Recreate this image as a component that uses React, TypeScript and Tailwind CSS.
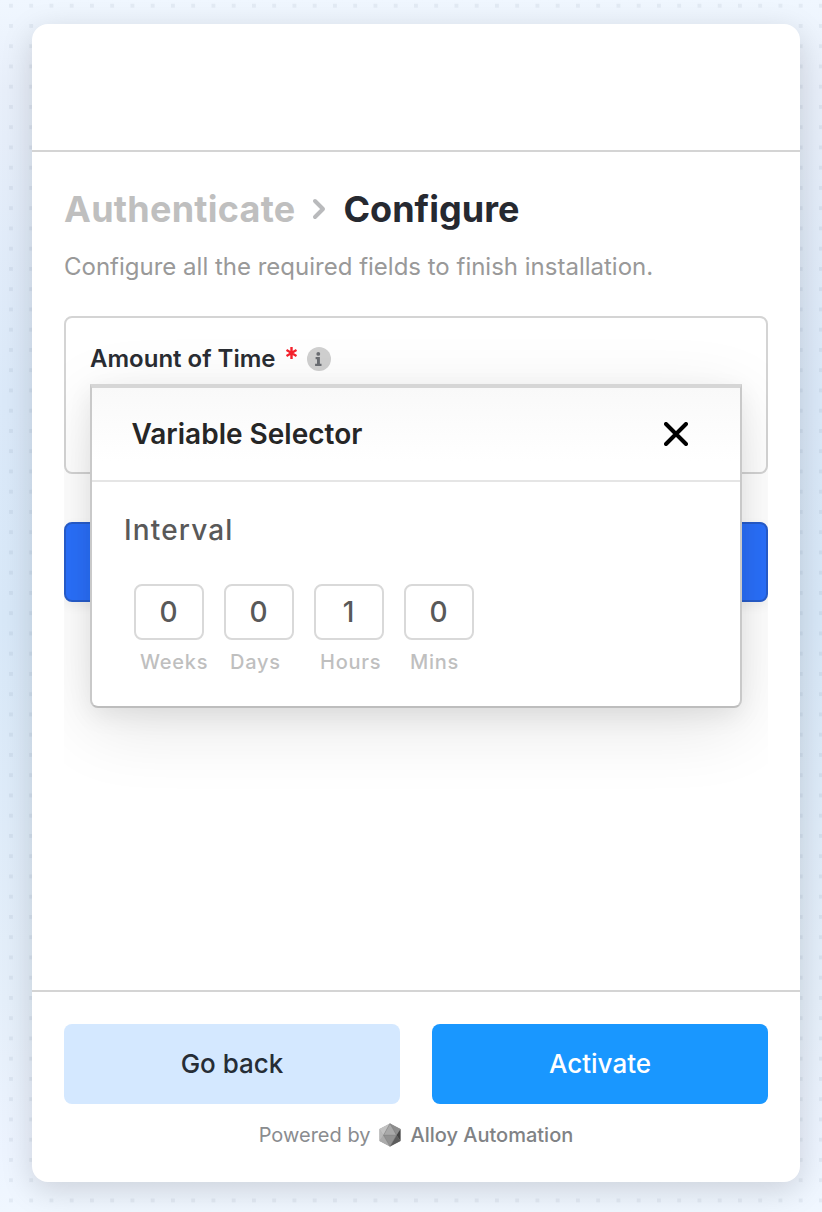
import React from "react";

const units = [
  { label: "Weeks", value: "0" },
  { label: "Days", value: "0" },
  { label: "Hours", value: "1" },
  { label: "Mins", value: "0" },
];

function AlloyLogo() {
  return (
    <svg className="h-6 w-[22px] shrink-0" viewBox="0 0 22 24">
      <path d="M11 .5 21.5 6V18L11 23.5.5 18V6Z" fill="#a0a0a0" />
      <path d="M.5 6 4.5 12.2.5 18Z" fill="#b8b8b8" />
      <path d="M11 .5.5 6 4.5 12.2Z" fill="#c2c2c2" />
      <path d="M11 .5 4.5 12.2H17.5Z" fill="#a9a9a9" />
      <path d="M11 .5 21.5 6 17.5 12.2Z" fill="#8e8e8e" />
      <path d="M4.5 12.2H17.5L11 23.5Z" fill="#929292" />
      <path d="M.5 18 4.5 12.2 11 23.5Z" fill="#ababab" />
      <path d="M21.5 6V18L17.5 12.2Z" fill="#444" />
      <path d="M21.5 18 17.5 12.2 11 23.5Z" fill="#5c5c5c" />
      <path d="M11 .5 4.5 12.2H17.5ZM4.5 12.2 11 23.5 17.5 12.2" fill="none" stroke="#747474" strokeWidth=".4" />
    </svg>
  );
}

function VariableSelector() {
  return (
    <section className="absolute top-[68px] left-[26px] flex h-[324px] w-[652px] flex-col rounded-b-[8px] border-2 border-t-4 border-[#c9c9c9] border-t-[#d6d6d6] border-b-[#bdbdbd] bg-white shadow-[0_18px_72px_rgba(0,0,0,0.11),0_8px_24px_rgba(0,0,0,0.07)]">
      <header className="flex h-[94px] items-center justify-between border-b-2 border-[#e5e5e5] bg-linear-to-b from-[#f9f9f9] to-white to-80% pr-[52px] pl-[39.5px]">
        <h2 className="text-[28px] font-semibold text-[#262626]">Variable Selector</h2>
        <svg className="size-6" viewBox="0 0 24 24" fill="none" stroke="#000" strokeWidth="4" strokeLinecap="round">
          <path d="M2 2 22 22M22 2 2 22" />
        </svg>
      </header>
      <h3 className="mt-7 ml-8 text-[28px] leading-10 font-medium tracking-[1.15px] text-[#595959]">Interval</h3>
      <div className="mt-[34px] ml-[42px] flex gap-5">
        {units.map((u) => (
          <div key={u.label} className="w-[70px]">
            <div className="flex h-14 items-center justify-center rounded-[8px] border-2 border-[#d9d9d9] pr-px text-[28px] font-medium text-[#595959]">
              {u.value}
            </div>
            <div className="mt-2 ml-1.5 text-[20px] leading-7 font-medium tracking-[0.75px] text-[#bfbfbf]">{u.label}</div>
          </div>
        ))}
      </div>
    </section>
  );
}

export default function App() {
  return (
    <div className="h-[1212px] w-[822px] bg-[linear-gradient(to_bottom,#f0f7ff_0px,#e8effa_90px,#dbe9f9_400px,#d8e8f8_620px,#e5effa_1000px,#edf4ff_1150px,#f0f7ff_1212px)] font-['Inter',sans-serif]">
      <div className="h-full [background-image:conic-gradient(from_270deg_at_4px_4px,rgba(60,80,110,0.075)_90deg,transparent_0deg)] [background-position:9px_3.75px] [background-size:20.25px_20.25px] pt-6 pl-8">
        <main className="flex h-[1158px] w-[768px] flex-col overflow-hidden rounded-[16px] bg-white shadow-[0_8px_32px_rgba(0,0,0,0.15)]">
          <div className="h-32 shrink-0 border-b-2 border-[#d4d4d4]" />
          <div className="flex-1 px-8 pt-8">
            <div className="flex h-[50px] items-center text-[36px] font-bold">
              <span className="tracking-[0.25px] text-[#bfbfbf]">Authenticate</span>
              <svg className="mr-[17px] ml-[17px] h-[22px] w-[14px]" viewBox="0 0 14 22" fill="none" stroke="#b9babc" strokeWidth="4" strokeLinecap="round" strokeLinejoin="round">
                <path d="M3 3 11 11 3 19" />
              </svg>
              <span className="text-[#262930]">Configure</span>
            </div>
            <p className="mt-[13px] text-[24px] leading-10 text-[#999]">Configure all the required fields to finish installation.</p>
            <div className="relative mt-[29px] h-[520px] overflow-hidden">
              <div className="h-[158px] rounded-[8px] border-2 border-[#d4d4d4] px-6 pt-[21px]">
                <div className="flex h-10 items-center text-[24px] font-semibold text-[#2a2d33]">
                  Amount of Time
                  <svg className="mb-3 ml-[10px] h-3 w-[11px]" viewBox="0 0 11 12" fill="none" stroke="#f5222d" strokeWidth="2.4">
                    <path d="M5.5 0V12M.5 3 10.5 9M10.5 3 .5 9" />
                  </svg>
                  <span className="ml-2.5 flex size-6 items-center justify-center rounded-full bg-[#d0d0d0]">
                    <svg className="h-[14px] w-[7px]" viewBox="0 0 7 14" fill="#6a6d72">
                      <circle cx="3.3" cy="1.9" r="1.9" />
                      <path d="M.6 5H4.9V11.8H6.5V14H.1V11.8H2V7.2H.6Z" />
                    </svg>
                  </span>
                </div>
              </div>
              <div className="mt-12 h-20 rounded-[8px] border-2 border-[#275dcc] bg-[#2a70fb] shadow-[0_4px_12px_rgba(0,0,0,0.06)]" />
              <VariableSelector />
            </div>
          </div>
          <footer className="h-48 shrink-0 border-t-2 border-[#d4d4d4] px-8 pt-8">
            <div className="flex gap-8 text-[26px] font-medium">
              <button className="h-20 flex-1 rounded-[8px] bg-[#d4e8ff] pb-px text-[#262d36]">Go back</button>
              <button className="h-20 flex-1 rounded-[8px] bg-[#1997ff] pb-px text-white">Activate</button>
            </div>
            <div className="mt-4 flex h-[30px] items-center justify-center text-[20px] text-[#8a8c8f]">
              <span>Powered by</span>
              <span className="mr-2.5 ml-2 flex"><AlloyLogo /></span>
              <span className="font-medium text-[#808285]">Alloy Automation</span>
            </div>
          </footer>
        </main>
      </div>
    </div>
  );
}
